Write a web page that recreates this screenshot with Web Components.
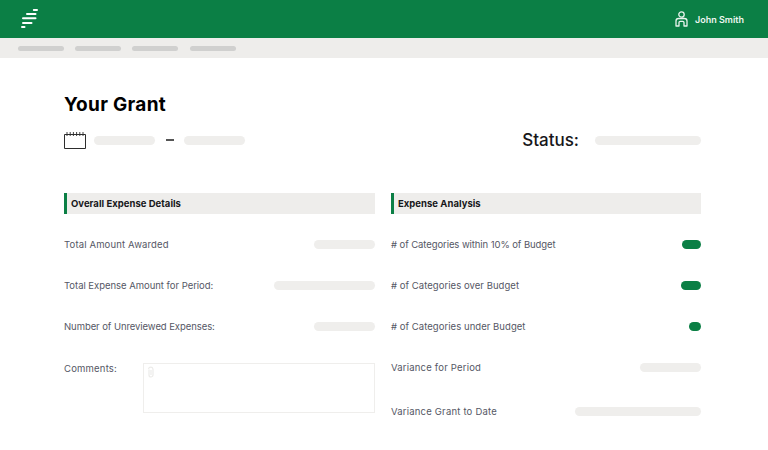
<!doctype html>
<html><head><meta charset="utf-8"><style>
html,body{margin:0;padding:0;background:#fff}
body{font-family:Inter,"Liberation Sans",sans-serif;width:768px;height:450px;overflow:hidden}
</style></head><body>
<app-header></app-header>
<sub-nav></sub-nav>
<grant-page></grant-page>
<script>
function def(name,html){customElements.define(name,class extends HTMLElement{constructor(){super();this.attachShadow({mode:'open'}).innerHTML=html}})}
def('ph-bar',`<style>:host{display:block;height:var(--h,10px);width:var(--w,60px);border-radius:99px;background:var(--c,#efeeec);flex:none}</style>`);
def('app-header',`<style>
:host{display:flex;align-items:center;justify-content:space-between;height:38px;background:#0b7f45;padding:0 24px 0 21px;box-sizing:border-box;color:#fff}
.u{display:flex;align-items:center;gap:7px;font-size:9px;font-weight:600;color:#eef6f1}
svg{display:block}
</style>
<svg width="18" height="20" viewBox="0 0 18 20" fill="none" stroke="#fff" stroke-width="2" stroke-linecap="round"><path d="M12.800 1H16M6 5H14.500M2 9.300H14.500M2 14H10.500M1 18H3.500"/></svg>
<div class="u"><svg width="13" height="16" viewBox="0 0 13 16" fill="none" stroke="#e9f3ed" stroke-width="1.300" stroke-linejoin="round"><circle cx="6.500" cy="3.500" r="2.700"/><path d="M1 15V10Q1 7.500 3.500 7.500H9.500Q12 7.500 12 10V15H9V11.500Q9 10.300 7.800 10.300H5.200Q4 10.300 4 11.500V15Z"/></svg><span>John Smith</span></div>`);
def('sub-nav',`<style>
:host{display:flex;align-items:center;gap:11px;height:20px;background:#eeedeb;padding:0 18px;box-sizing:border-box}
ph-bar{--w:46px;--h:5px;--c:#d0d0cf}
ph-bar:last-child{margin-left:1px}
</style><ph-bar></ph-bar><ph-bar></ph-bar><ph-bar></ph-bar><ph-bar></ph-bar>`);
def('info-row',`<style>
:host{display:flex;align-items:center;justify-content:space-between;height:var(--rh,41px);font-size:9.500px;color:#555765;letter-spacing:var(--ls,.03px)}
</style><slot></slot><slot name="v"></slot>`);
def('section-head',`<style>
:host{display:flex;align-items:center;height:21px;background:#eeedeb;border-left:3px solid #0b7f45;padding-left:4px;font-size:9.500px;font-weight:700;color:#17171a;margin-bottom:10px;letter-spacing:.03px}
</style><slot></slot>`);
def('grant-page',`<style>
:host{display:block;padding:36px 67px 0 64px}
h1{margin:0;font-size:19px;line-height:22px;font-weight:700;color:#000;letter-spacing:.3px}
.top{display:flex;align-items:center;justify-content:space-between;margin-top:14px;height:20px}
.l,.r{display:flex;align-items:center}
.l ph-bar{--w:61px;--h:9px}
.dash{width:8px;height:1.500px;background:#555;margin:0 10px 0 11px}
.l svg{margin:1px 8px 0 0}
.r{font-size:17px;font-weight:500;color:#17171a;gap:16px}
.r ph-bar{--w:106px;--h:9px}
.cols{display:grid;grid-template-columns:311px 310px;gap:16px;margin-top:43px}
.cm{display:flex;justify-content:space-between;height:50px;font-size:9.500px;color:#555765;letter-spacing:.2px;margin-top:16px}
.box{position:relative;width:232px;height:50px;box-sizing:border-box;border:1px solid #efeeec}
.box svg{position:absolute;left:3px;top:2px}
.last{--rh:47px}
</style>
<h1>Your Grant</h1>
<div class="top">
<div class="l"><svg width="22" height="17" viewBox="0 0 22 17" fill="none" stroke="#2d2d2d" stroke-width="1"><path d="M.5 2.500H21.500V16.500H.5Z"/><path d="M3 0V4M6.200 0V4M9.400 0V4M12.600 0V4M15.800 0V4M19 0V4" stroke-width=".9"/></svg><ph-bar></ph-bar><div class="dash"></div><ph-bar></ph-bar></div>
<div class="r"><span>Status:</span><ph-bar></ph-bar></div>
</div>
<div class="cols">
<div>
<section-head>Overall Expense Details</section-head>
<info-row style="--ls:.15px">Total Amount Awarded<ph-bar slot="v" style="--w:61px;--h:9px"></ph-bar></info-row>
<info-row style="--ls:-.03px">Total Expense Amount for Period:<ph-bar slot="v" style="--w:101px;--h:9px"></ph-bar></info-row>
<info-row style="--ls:-.07px">Number of Unreviewed Expenses:<ph-bar slot="v" style="--w:61px;--h:9px"></ph-bar></info-row>
<div class="cm"><span>Comments:</span><div class="box"><svg width="8" height="13" viewBox="0 0 8 13" fill="none" stroke="#ecebe9" stroke-width="1.200"><path d="M2 3.500V9A2 2 0 0 0 6 9V3A2.300 2.300 0 0 0 1.500 3"/><path d="M4 4V9"/></svg></div></div>
</div>
<div>
<section-head>Expense Analysis</section-head>
<info-row style="--ls:-.08px"># of Categories within 10% of Budget<ph-bar slot="v" style="--w:19px;--h:9px;--c:#0b7f45"></ph-bar></info-row>
<info-row style="--ls:.05px"># of Categories over Budget<ph-bar slot="v" style="--w:20px;--h:9px;--c:#0b7f45"></ph-bar></info-row>
<info-row style="--ls:.05px"># of Categories under Budget<ph-bar slot="v" style="--w:12px;--h:9px;--c:#0b7f45"></ph-bar></info-row>
<info-row style="--ls:.2px">Variance for Period<ph-bar slot="v" style="--w:61px;--h:9px"></ph-bar></info-row>
<info-row class="last" style="--ls:.2px">Variance Grant to Date<ph-bar slot="v" style="--w:126px;--h:9px"></ph-bar></info-row>
</div>
</div>`);
</script>
</body></html>
